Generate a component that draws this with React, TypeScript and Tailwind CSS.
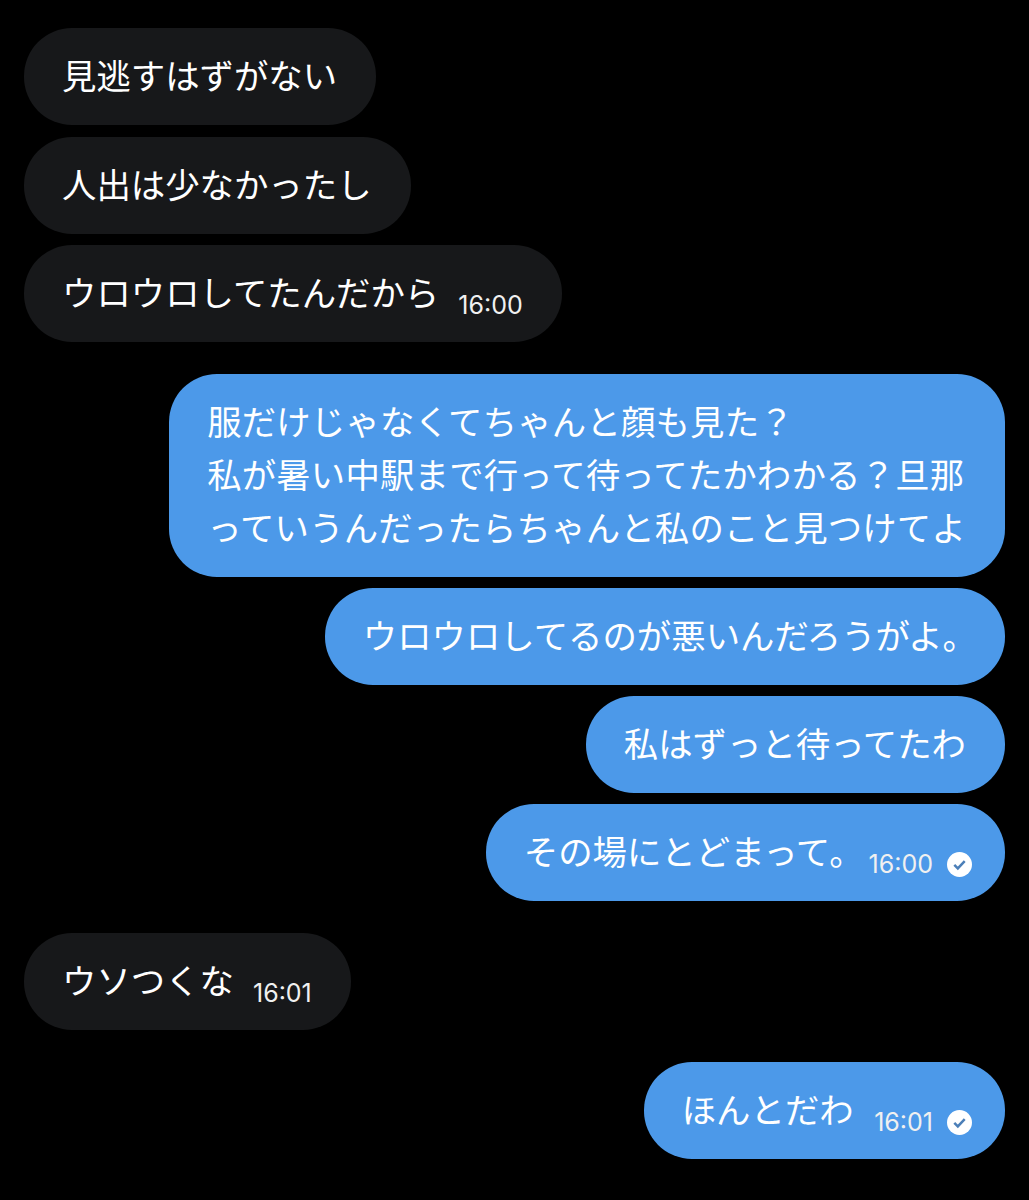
const font = "font-['Inter','Noto_Sans_CJK_JP',sans-serif]";

const Check = () => (
  <svg width="25" height="25" viewBox="0 0 24 24" className="ml-[14px] mr-[-6px]">
    <circle cx="12" cy="12" r="12" fill="#fff" />
    <path d="M7 12.3l3.4 3.4L17 8.8" fill="none" stroke="#4c7fb8" strokeWidth="2.4" />
  </svg>
);

const Bubble = ({ mine, time, check, children }: { mine?: boolean; time?: string; check?: boolean; children: React.ReactNode }) => (
  <div className={`flex ${mine ? 'justify-end' : 'justify-start'}`}>
    <div className={`flex items-end whitespace-nowrap rounded-[48px] py-[22px] pl-[38px] pr-[39px] text-[34.4px] leading-[53px] text-white ${mine ? 'bg-[#4c99e9]' : 'bg-[#17181a]'}`}>
      <span>{children}</span>
      {time && (
        <span className="ml-[19px] flex items-center text-[25px] leading-[30px] text-[#f0f0f0]">
          {time}
          {check && <Check />}
        </span>
      )}
    </div>
  </div>
);

export default function App() {
  return (
    <div className={`h-[1200px] w-[1029px] overflow-hidden bg-black px-[24px] pt-[28px] ${font}`}>
      <div className="flex flex-col gap-[11.5px]">
        <Bubble>見逃すはずがない</Bubble>
        <Bubble>人出は少なかったし</Bubble>
        <Bubble time="16:00">ウロウロしてたんだから</Bubble>
      </div>
      <div className="mt-[32px] flex flex-col gap-[11px]">
        <Bubble mine>
          <span className="tracking-[0.18px]">
            服だけじゃなくてちゃんと顔も見た？<br />
            私が暑い中駅まで行って待ってたかわかる？旦那<br />
            っていうんだったらちゃんと私のこと見つけてよ
          </span>
        </Bubble>
        {/* the closing 。 takes less than a full cell in the reference */}
        <Bubble mine>ウロウロしてるのが悪いんだろうがよ<span className="mr-[-11px]">。</span></Bubble>
        <Bubble mine>私はずっと待ってたわ</Bubble>
        <Bubble mine time="16:00" check>その場にとどまって<span className="mr-[-14px]">。</span></Bubble>
      </div>
      <div className="mt-[32px]">
        <Bubble time="16:01">ウソつくな</Bubble>
      </div>
      <div className="mt-[32px]">
        <Bubble mine time="16:01" check><span className="mr-[1.5px]">ほんとだわ</span></Bubble>
      </div>
    </div>
  );
}
